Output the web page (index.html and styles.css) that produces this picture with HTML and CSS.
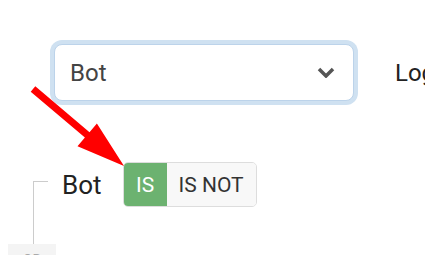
FILE: index.html
```html
<!DOCTYPE html>
<html lang="en">
<head>
    <meta charset="UTF-8">
    <meta name="viewport" content="width=device-width, initial-scale=1.0">
    <title>Condition Builder</title>
    <link rel="stylesheet" href="styles.css">
</head>
<body>

    <div class="filter-row">
        <div class="field-select">
            <span class="field-value">Bot</span>
            <svg class="chevron" width="18" height="11" viewBox="0 0 18 11">
                <polyline points="2,2 9,9 16,2" fill="none" stroke="#555" stroke-width="3.5"/>
            </svg>
        </div>
        <span class="next-field">Logged in</span>
    </div>

    <div class="tree">
        <div class="branch-line"></div>
        <div class="condition">
            <span class="condition-label">Bot</span>
            <div class="toggle">
                <button class="toggle-opt active">IS</button>
                <button class="toggle-opt">IS NOT</button>
            </div>
        </div>
    </div>
    <div class="or-badge">OR</div>

    <!-- annotation arrow -->
    <svg class="pointer-arrow" width="425" height="255" viewBox="0 0 425 255">
        <polygon fill="#ff0000" points="35.3,86.3 89.5,132.2 96.9,123.5 124,166 77.5,146.3 84.9,137.6 30.7,91.7"/>
    </svg>

</body>
</html>
```

FILE: styles.css
```css
body {
    font-family: Roboto, "Liberation Sans", sans-serif;
    margin: 0;
    padding: 44px 0 0 0;
    background: #fff;
    overflow: hidden;
}

.filter-row {
    display: flex;
    align-items: center;
    gap: 41px;
    padding-left: 54px;
}

.field-select {
    box-sizing: border-box;
    width: 300px;
    height: 57px;
    flex-shrink: 0;
    display: flex;
    align-items: center;
    justify-content: space-between;
    padding: 0 18px 0 15px;
    border: 1px solid #bcd3ea;
    border-radius: 8px;
    box-shadow: 0 0 0 4px #cfe1f1;
    background: white;
}

.field-value {
    font-size: 24px;
    color: #444;
}

.chevron {
    display: block;
}

.next-field {
    font-size: 24px;
    color: #222;
    white-space: nowrap;
}

.tree {
    display: flex;
    align-items: flex-start;
    margin-top: 61px;
    padding-left: 33px;
}

.branch-line {
    width: 14px;
    height: 62px;
    margin-top: 19px;
    flex-shrink: 0;
    border-left: 1px solid #ccc;
    border-top: 1px solid #ccc;
}

.condition {
    display: flex;
    align-items: center;
    gap: 21px;
    margin-left: 14px;
    height: 45px;
}

.condition-label {
    font-size: 26px;
    color: #222;
}

.toggle {
    display: flex;
    height: 45px;
    border: 1px solid #ddd;
    border-radius: 5px;
    overflow: hidden;
    box-sizing: border-box;
}

.toggle-opt {
    font-family: inherit;
    font-size: 21px;
    border: none;
    margin: 0;
    padding: 0 12px;
    background: #f8f8f8;
    color: #333;
}

.toggle-opt.active {
    width: 43px;
    padding: 0;
    background: #6cb270;
    color: white;
}

.or-badge {
    width: 48px;
    height: 24px;
    margin-left: 8px;
    background: #f4f4f4;
    color: #aaa;
    font-size: 14px;
    text-align: center;
    line-height: 24px;
    padding-top: 4px;
}

/* annotation overlay */
.pointer-arrow {
    position: absolute;
    left: 0;
    top: 0;
    pointer-events: none;
}
```
